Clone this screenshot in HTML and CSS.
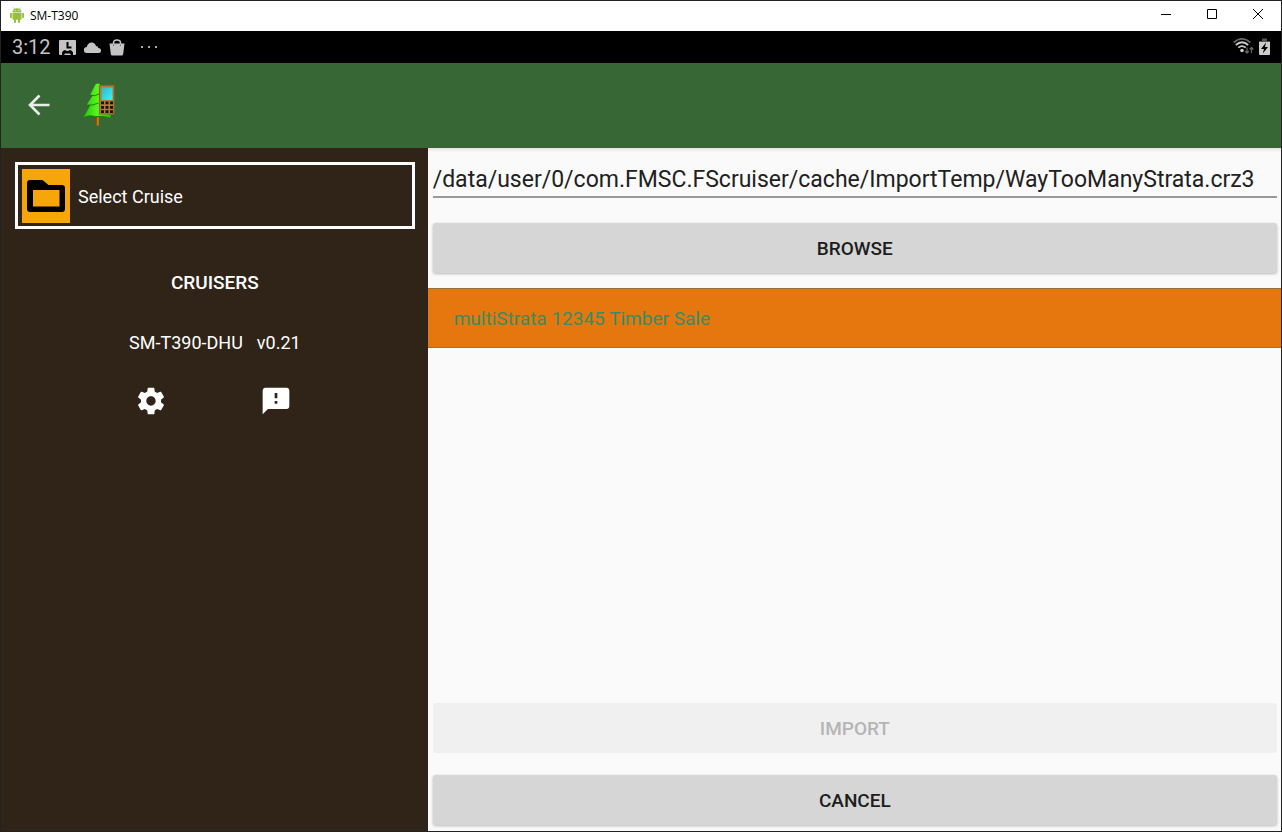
FILE: index.html
```html
<!DOCTYPE html>
<html lang="en">
<head>
<meta charset="utf-8">
<title>SM-T390</title>
<link rel="stylesheet" href="styles.css">
</head>
<body>
<div class="window">
  <header class="titlebar">
    <svg class="android" viewBox="0 0 14 16" aria-hidden="true">
      <g fill="#97c03d">
        <path d="M2.5 5.2a4.5 4 0 0 1 9 0z"/>
        <path d="M3.3.5l1.4 2M10.7.5l-1.4 2" stroke="#97c03d" stroke-width=".7"/>
        <path d="M2.5 5.8h9v6q0 1-1 1h-7q-1 0-1-1z"/>
        <rect x="0" y="5.8" width="1.9" height="5.4" rx=".9"/>
        <rect x="12.1" y="5.8" width="1.9" height="5.4" rx=".9"/>
        <rect x="4" y="11" width="2" height="5" rx=".9"/>
        <rect x="8" y="11" width="2" height="5" rx=".9"/>
      </g>
      <circle cx="5" cy="3.5" r=".6" fill="#fff"/><circle cx="9" cy="3.5" r=".6" fill="#fff"/>
    </svg>
    <span class="title">SM-T390</span>
    <div class="window-controls">
      <button type="button" aria-label="Minimize"><svg viewBox="0 0 12 12"><path d="M1 5.5h10"/></svg></button>
      <button type="button" aria-label="Maximize"><svg viewBox="0 0 12 12"><path d="M1.5 .5h9v9h-9z"/></svg></button>
      <button type="button" aria-label="Close"><svg viewBox="0 0 12 12"><path d="M1 0l10 10M11 0L1 10"/></svg></button>
    </div>
  </header>

  <div class="statusbar">
    <span class="clock">3:12</span>
    <svg class="note" width="17" height="15" viewBox="0 0 17 15" aria-hidden="true">
      <rect width="17" height="15" rx="1" fill="#c4c4c4"/>
      <path d="M8.500 2v5.500h4" fill="none" stroke="#000" stroke-width="2"/>
      <path d="M3 15v-2.500q1-2.500 3-2.500 2.500 2 5 0 2 0 3 2.500V15h-2l-1-1.500H6L5 15z" fill="#000"/>
    </svg>
    <svg class="note" width="17" height="11" viewBox="0 0 17 11" aria-hidden="true">
      <path d="M3 11a3 3 0 0 1-.3-6Q4 .5 7.500.5q3.500 0 4.500 3.500Q14 4 14.300 6 17 6 17 8.500T14.500 11z" fill="#c4c4c4"/>
    </svg>
    <svg class="note" width="16" height="17" viewBox="0 0 16 17" aria-hidden="true">
      <path d="M4.500 7V4a3.500 3 0 0 1 7 0v3" fill="none" stroke="#c4c4c4" stroke-width="1.500"/>
      <path d="M.5 4.500h15l-1.300 10.500q-.2 1.500-1.700 1.500h-9Q2 16.500 1.800 15z" fill="#c4c4c4"/>
      <path d="M4.500 5.500v1.500M11.500 5.500v1.500" stroke="#777"/>
    </svg>
    <svg class="dots" width="16" height="2" viewBox="0 0 16 2" aria-hidden="true">
      <path d="M0 0h2v2H0zM7 0h2v2H7zM14 0h2v2h-2z" fill="#aaa"/>
    </svg>
    <div class="indicators">
      <svg width="21" height="18" viewBox="0 0 21 18" aria-hidden="true">
        <g fill="none" stroke-width="1.700">
          <path d="M.7 5.500Q9 -1.800 17.300 5.500" stroke="#666"/>
          <path d="M2.800 8Q9 2.500 15.200 8" stroke="#ccc"/>
          <path d="M5.300 10.700Q9 7.500 12.700 10.700" stroke="#ccc"/>
        </g>
        <circle cx="9" cy="13.500" r="1.800" fill="#ccc"/>
        <path d="M14 10.500v5M12.200 14l1.800 2 1.800-2M18.500 16v-5M16.700 12.500l1.800-2 1.800 2" stroke="#666" fill="none" stroke-width="1.200"/>
      </svg>
      <svg width="11" height="17" viewBox="0 0 11 17" aria-hidden="true">
        <path d="M0 3h3V.5h5V3h3v1H0z" fill="#555"/>
        <path d="M0 4h11v12q0 1-1 1H1q-1 0-1-1z" fill="#ccc"/>
        <path d="M7 4.500L2 11h3l-1.200 4.500L9 9H6z" fill="#000"/>
      </svg>
    </div>
  </div>

  <nav class="appbar">
    <button type="button" class="back" aria-label="Back">
      <svg width="22" height="22" viewBox="0 0 22 22"><path d="M21.500 11H2M11.500 1.500L2 11l9.500 9.500" fill="none" stroke="#e9efe8" stroke-width="2.600"/></svg>
    </button>
    <svg class="logo" width="33" height="44" viewBox="0 0 33 44" aria-hidden="true">
      <defs>
        <linearGradient id="leaf"><stop offset="0" stop-color="#1fc60b"/><stop offset=".5" stop-color="#59f51b"/><stop offset="1" stop-color="#1eb90b"/></linearGradient>
        <linearGradient id="screen" x2="1" y2="1"><stop offset="0" stop-color="#35b7cf"/><stop offset="1" stop-color="#38f3ea"/></linearGradient>
      </defs>
      <path d="M12.500 32h3.500v10.500h-3.500z" fill="#b9790f"/><path d="M12.500 32h1v10.500h-1z" fill="#5c3a0b"/>
      <path d="M14.500.5q-2 0-2.500 2L7 12h3L3.500 22h4L.5 34.500q5-3 12-1 8-1 14.500 1.500l1-3-11-11V1z" fill="url(#leaf)"/>
      <path d="M7 12q5 2 9-1M3.500 22q6 1 12-2M.5 34.500q6-3 12-1 7-1 14 1.500" fill="none" stroke="#138707"/>
      <rect x="16.500" y="2.500" width="14.500" height="28.500" fill="#b17a35" stroke="#94652a"/>
      <rect x="18.500" y="4.500" width="11" height="12.500" fill="url(#screen)"/>
      <path d="M18 18.500h3v2.800h-3zM22.500 18.500h3v2.800h-3zM27 18.500h3v2.800h-3zM18 22.900h3v2.800h-3zM22.500 22.900h3v2.800h-3zM27 22.900h3v2.800h-3zM18 27.300h3v2.700h-3zM22.500 27.300h3v2.700h-3zM27 27.300h3v2.700h-3z" fill="#17140d"/>
    </svg>
  </nav>

  <div class="content">
    <aside class="sidebar">
      <button type="button" class="select-cruise">
        <span class="folder"><svg width="38" height="34" viewBox="0 0 38 34" aria-hidden="true"><path fill-rule="evenodd" d="M3 1h12.500l6 5H35q3 0 3 3v21q0 3-3 3H3q-3 0-3-3V4q0-3 3-3zM6 11v16.500h26.500V11z"/></svg></span>
        Select Cruise
      </button>
      <button type="button" class="cruisers">CRUISERS</button>
      <div class="device"><span>SM-T390-DHU</span><span>v0.21</span></div>
      <div class="tools">
        <button type="button" aria-label="Settings"><svg width="32" height="32" viewBox="0 0 24 24" fill="#fff"><path d="M19.430 12.980c.04-.32.07-.64.07-.98s-.03-.66-.07-.98l2.110-1.650c.19-.15.24-.42.12-.64l-2-3.460c-.12-.22-.39-.3-.61-.22l-2.490 1c-.52-.4-1.080-.73-1.690-.98l-.38-2.650C14.460 2.180 14.250 2 14 2h-4c-.25 0-.46.18-.49.42l-.38 2.650c-.61.25-1.170.59-1.690.98l-2.490-1c-.23-.09-.49 0-.61.22l-2 3.460c-.13.22-.07.49.12.64l2.110 1.650c-.04.32-.07.65-.07.98s.03.66.07.98l-2.110 1.650c-.19.15-.24.42-.12.64l2 3.460c.12.22.39.3.61.22l2.490-1c.52.4 1.080.73 1.690.98l.38 2.650c.03.24.24.42.49.42h4c.25 0 .46-.18.49-.42l.38-2.650c.61-.25 1.170-.59 1.690-.98l2.490 1c.23.09.49 0 .61-.22l2-3.460c.12-.22.07-.49-.12-.64l-2.110-1.650zM12 15.500c-1.930 0-3.500-1.570-3.500-3.500s1.570-3.500 3.500-3.500 3.500 1.570 3.500 3.500-1.570 3.500-3.500 3.500z"/></svg></button>
        <button type="button" aria-label="Feedback"><svg width="32" height="32" viewBox="0 0 24 24" fill="#fff"><path d="M20 2H4c-1.100 0-1.990.9-1.990 2L2 22l4-4h14c1.100 0 2-.9 2-2V4c0-1.100-.9-2-2-2zm-7 12h-2v-2h2v2zm0-4h-2V6h2v4z"/></svg></button>
      </div>
    </aside>

    <main class="import">
      <input class="path" type="text" aria-label="File path" value="/data/user/0/com.FMSC.FScruiser/cache/ImportTemp/WayTooManyStrata.crz3">
      <button type="button" class="action">BROWSE</button>
      <ul class="cruises"><li>multiStrata 12345 Timber Sale</li></ul>
      <button type="button" class="action action-import" disabled>IMPORT</button>
      <button type="button" class="action">CANCEL</button>
    </main>
  </div>
</div>
</body>
</html>
```
FILE: styles.css
```css
* { box-sizing: border-box; }
body { margin: 0; font-family: Roboto, "Liberation Sans", sans-serif; font-size: 19px; }
button { border: 0; padding: 0; background: none; font: inherit; color: inherit; cursor: pointer; }
svg { display: block; flex: none; }

.window { display: flex; flex-direction: column; min-height: 100vh; border: 1px solid #222; }

.titlebar { display: flex; align-items: center; height: 30px; padding: 0 0 2px 9px; background: #fff; color: #000; }
.android { width: 14px; height: 16px; }
.title { margin-left: 6px; font: 12px "Open Sans", "Noto Sans", sans-serif; }
.window-controls { display: flex; margin-left: auto; }
.window-controls button { display: grid; place-items: center; width: 46px; height: 28px; }
.window-controls svg { width: 12px; height: 12px; fill: none; stroke: #000; stroke-width: 1; }

.statusbar { display: flex; align-items: center; gap: 8px; height: 32px; padding: 0 11px; background: #000; }
.clock { color: #c4c4c4; font-size: 20px; line-height: 32px; }
.dots { margin-left: 8px; }
.indicators { display: flex; align-items: center; gap: 5px; margin-left: auto; padding-bottom: 2px; }

.appbar { display: flex; align-items: center; gap: 33px; height: 85px; padding: 0 0 2px 27px; background: #376735; }

.content { flex: 1; display: grid; grid-template-columns: 1fr 2fr; }

.sidebar { display: flex; flex-direction: column; align-items: center; padding: 14px 13px 14px 14px; background: #302419; color: #fff; font-size: 18px; }
.select-cruise { display: flex; align-items: center; gap: 8px; width: 100%; padding: 4px 4px 3px; border: 3px solid #fff; }
.folder { display: grid; place-items: center; width: 48px; height: 54px; background: #f7a60a; }
.cruisers { margin-top: 42px; font-size: 19px; font-weight: 500; line-height: 24px; }
.device { display: flex; gap: 14px; margin-top: 36px; line-height: 24px; }
.tools { display: flex; gap: 93px; margin-top: 30px; padding-right: 2px; }

.import { display: flex; flex-direction: column; padding-bottom: 6px; background: #fafafa; color: #212121; box-shadow: inset 0 4px 4px -3px #0002; }
.path { height: 36px; margin: 14px 4px 25px 5px; padding: 0; border: 0; border-bottom: 2px solid #999; outline: 0; background: none; color: #212121; font: 23px Roboto, sans-serif; }
.action { height: 50px; margin: 0 4px 0 5px; border-radius: 3px; background: #d6d6d6; box-shadow: 0 1px 3px #0004; color: #1d1d1d; font-weight: 500; }
.cruises { flex: 1; margin: 15px 0; padding: 0; list-style: none; }
.cruises li { height: 60px; padding-left: 26px; border-top: 1px solid #94713f; border-bottom: 1px solid #c8660d; background: #e6760e; color: #329066; line-height: 60px; }
.action-import { margin-bottom: 22px; background: #f0f0f0; box-shadow: none; color: #b5b5b5; cursor: default; }
```
